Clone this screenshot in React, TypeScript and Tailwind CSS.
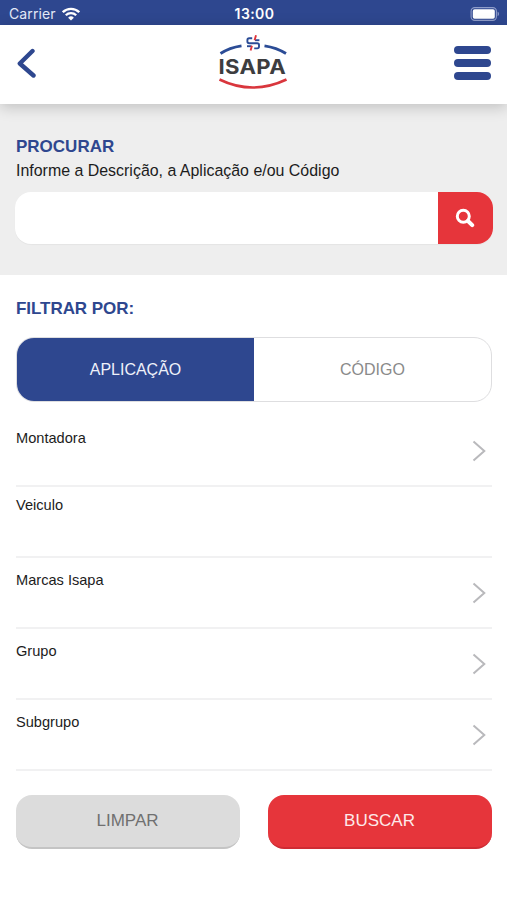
import { useState } from "react";
import { clsx } from "clsx";

type Filter = {
  label: string;
  arrow: boolean;
  className: string;
};

const filters: Filter[] = [
  { label: "Montadora", arrow: true, className: "h-[71px] pt-3" },
  { label: "Veiculo", arrow: false, className: "h-[71px] pt-2" },
  { label: "Marcas Isapa", arrow: true, className: "h-[71px] pt-3" },
  { label: "Grupo", arrow: true, className: "h-[71px] pt-3" },
  { label: "Subgrupo", arrow: true, className: "h-[71px] pt-3" },
];

function StatusBar() {
  return (
    <div className="grid h-[25px] grid-cols-3 items-center bg-[#2e478f] pt-0.5 pr-[7px] pl-[9px] font-['Inter',sans-serif] text-white">
      <div className="flex items-center gap-1.5">
        <span className="text-[14px] leading-5 tracking-[0.1px] text-[#e4e9f7]">
          Carrier
        </span>
        <svg width="18" height="14" viewBox="0 0 18 14" fill="none">
          <g stroke="currentColor" strokeWidth="2.3">
            <path d="M0.8 5.2a11.6 11.6 0 0 1 16.4 0" />
            <path d="M3.8 8.3a7.4 7.4 0 0 1 10.4 0" />
          </g>
          <path d="M9 13.6 6.1 10.7a4.1 4.1 0 0 1 5.8 0z" fill="currentColor" />
        </svg>
      </div>
      <span className="text-center text-[14px] leading-5 font-semibold tracking-[0.4px]">
        13:00
      </span>
      <svg
        className="justify-self-end"
        width="30"
        height="14"
        viewBox="0 0 30 14"
      >
        <rect
          x="1.1"
          y="0.6"
          width="25.3"
          height="12.8"
          rx="3.6"
          fill="none"
          stroke="#8f9dc9"
          strokeWidth="1.1"
        />
        <rect x="2.8" y="2.2" width="22" height="9.6" rx="1.8" fill="#fff" />
        <path d="M27.6 4.8c1.8.6 1.8 3.8 0 4.4z" fill="#8f9dc9" />
      </svg>
    </div>
  );
}

function Logo() {
  return (
    <svg width="72" height="58" viewBox="0 0 72 58" fill="none">
      <path d="M3.500 19.500q9-6 21-7.700" stroke="#2b4c96" strokeWidth="2.8" />
      <path d="M47.5 11.8q12 1.7 21.5 7.7" stroke="#2b4c96" strokeWidth="2.8" />
      <g strokeWidth="1.9">
        <path
          d="M35.2 4.2h-3q-1.800 0-1.800 1.800v1.500q0 1.700 1.800 1.700h8q1.800 0 1.800 1.700v1.700q0 1.800-1.800 1.800h-3"
          stroke="#2b4c96"
        />
        <path d="M38 6.200h4.400" stroke="#2b4c96" />
        <path d="M30 12.200h4.400" stroke="#2b4c96" />
        <path d="M39 1.200l-1.400 5" stroke="#e0343b" />
        <path d="M34.900 11.800l-1.300 4.600" stroke="#e0343b" />
      </g>
      <text
        x="1.500"
        y="39.600"
        textLength="67.500"
        lengthAdjust="spacingAndGlyphs"
        fill="#3d3d3f"
        className="font-['Inter',sans-serif] text-[20px] font-bold tracking-[0.3px]"
      >
        ISAPA
      </text>
      <path d="M2.5 45.5q33 16 67 0" stroke="#d9363d" strokeWidth="2.6" />
    </svg>
  );
}

function Header() {
  return (
    <header className="relative z-10 flex h-[79px] items-center justify-between bg-white pr-4 pb-1 pl-[17px] shadow-[0_3px_14px_rgba(0,0,0,0.2)]">
      <button className="w-[35px] pt-px" aria-label="Voltar">
        <svg width="20" height="30" viewBox="0 0 20 30" fill="none">
          <path
            d="M15.5 3 2.8 15.5 16.5 27.5"
            stroke="#2e478f"
            strokeWidth="4.4"
            strokeLinecap="round"
            strokeLinejoin="round"
          />
        </svg>
      </button>
      <Logo />
      <button className="flex w-[37px] flex-col gap-[5px]" aria-label="Menu">
        <span className="h-2 w-full rounded-full bg-[#2e478f]" />
        <span className="h-2 w-full rounded-full bg-[#2e478f]" />
        <span className="h-2 w-full rounded-full bg-[#2e478f]" />
      </button>
    </header>
  );
}

function Search() {
  return (
    <section className="h-[171px] bg-[#eee] pt-[31px] pr-3.5 pl-[15px]">
      <h2 className="pl-px text-[17px] leading-6 font-bold text-[#2e478f]">
        PROCURAR
      </h2>
      <p className="pl-px text-[15.95px] leading-6 text-[#1c1c1c]">
        Informe a Descrição, a Aplicação e/ou Código
      </p>
      <div className="mt-[9px] flex h-[52px] overflow-hidden rounded-2xl bg-white shadow-[0_1px_1px_rgba(0,0,0,0.04)]">
        <input className="min-w-0 flex-1 px-4 outline-none" aria-label="Procurar" />
        <button
          className="flex w-[55px] items-center justify-center bg-[#e6353b] pr-0.5 pb-px"
          aria-label="Buscar"
        >
          <svg width="20" height="20" viewBox="0 0 20 20" fill="none" stroke="#fff">
            <circle cx="8.3" cy="8.3" r="6" strokeWidth="3" />
            <path d="m13 13 4.2 4.2" strokeWidth="4" strokeLinecap="round" />
          </svg>
        </button>
      </div>
    </section>
  );
}

export default function App() {
  const [tab, setTab] = useState("APLICAÇÃO");

  return (
    <main className="h-[900px] bg-white font-['Liberation_Sans',Arial,sans-serif]">
      <StatusBar />
      <Header />
      <Search />
      <section className="pt-[22px] pr-[15px] pl-4">
        <h2 className="text-[17px] leading-6 font-bold tracking-[-0.05px] text-[#2e478f]">
          FILTRAR POR:
        </h2>
        <div className="mt-4 flex h-[65px] overflow-hidden rounded-[18px] border border-[#dedee0]">
          {["APLICAÇÃO", "CÓDIGO"].map((name) => (
            <button
              key={name}
              onClick={() => setTab(name)}
              className={clsx(
                "flex-1 text-[16px]",
                tab === name ? "bg-[#2e478f] text-[#eef1fa]" : "text-[#8a8a8a]"
              )}
            >
              {name}
            </button>
          ))}
        </div>
        <ul className="mt-[14px]">
          {filters.map(({ label, arrow, className }) => (
            <li
              key={label}
              className={clsx(
                "flex justify-between border-b-2 border-[#f1f1f2] text-[14.6px] leading-5 text-[#1c1c1c]",
                className
              )}
            >
              {label}
              {arrow && (
                <svg
                  className="mt-3 mr-1.5"
                  width="14"
                  height="22"
                  viewBox="0 0 14 22"
                  fill="none"
                >
                  <path d="m1.5 1.5 10.8 9.5L1.5 20.5" stroke="#b9b9bc" strokeWidth="2" />
                </svg>
              )}
            </li>
          ))}
        </ul>
        <div className="mt-6 flex gap-7">
          <button className="h-[54px] flex-1 rounded-2xl border-b-2 border-[#c4c4c4] bg-[#dcdcdc] pr-px text-[17px] text-[#707070]">
            LIMPAR
          </button>
          <button className="h-[54px] flex-1 rounded-2xl border-b-2 border-[#cf2b33] bg-[#e6353b] pr-px text-[17px] text-[#fdeaea]">
            BUSCAR
          </button>
        </div>
      </section>
    </main>
  );
}
